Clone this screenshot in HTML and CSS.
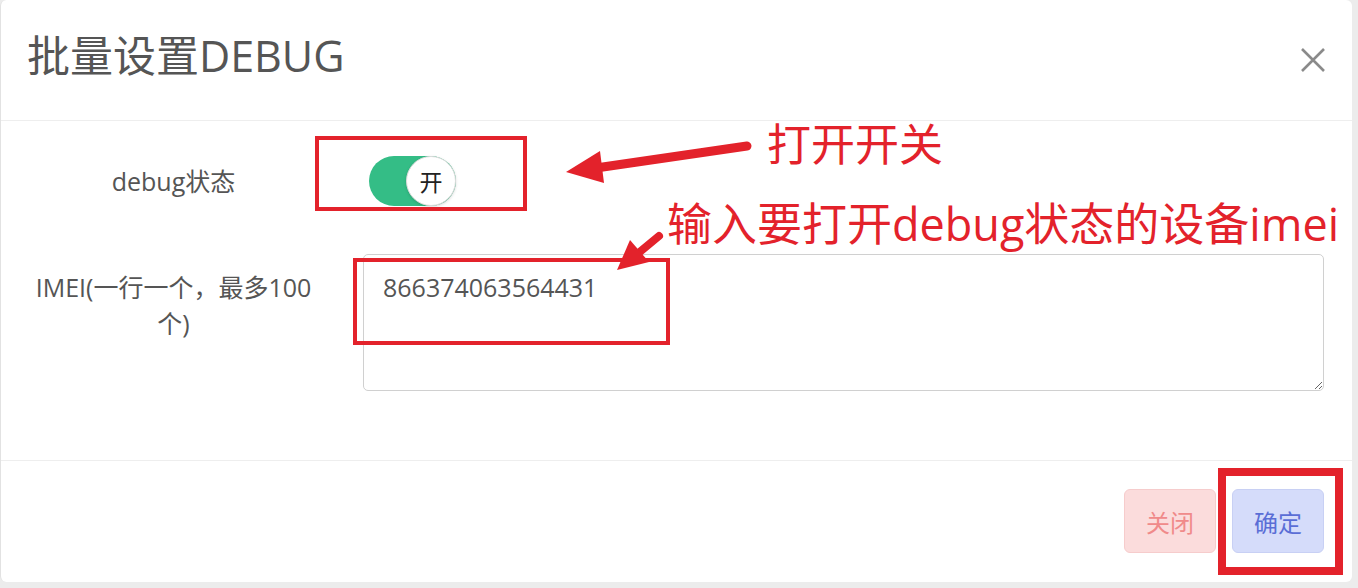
FILE: index.html
```html
<!DOCTYPE html>
<html lang="zh-CN">
<head>
<meta charset="utf-8">
<title>批量设置DEBUG</title>
<link rel="stylesheet" href="styles.css">
</head>
<body>
<div class="modal">
  <div class="modal-header">
    <h1 class="modal-title">批量设置DEBUG</h1>
    <button class="close-btn" aria-label="close">
      <svg width="26" height="26" viewBox="0 0 26 26"><path d="M2 2 L24 24 M24 2 L2 24" stroke="#8a8a8a" stroke-width="2.6" fill="none"/></svg>
    </button>
  </div>
  <div class="modal-body">
    <div class="form-row row-switch">
      <label class="form-label">debug状态</label>
      <div class="form-control">
        <div class="switch">
          <span class="switch-knob">开</span>
        </div>
      </div>
    </div>
    <div class="form-row row-imei">
      <label class="form-label label-top">IMEI(一行一个，最多100个)</label>
      <div class="form-control">
        <textarea class="imei-input">866374063564431</textarea>
      </div>
    </div>
  </div>
  <div class="modal-footer">
    <button class="btn btn-close">关闭</button>
    <button class="btn btn-ok">确定</button>
  </div>
</div>

<div class="annotations">
  <svg class="anno-svg" width="1358" height="588" viewBox="0 0 1358 588">
    <rect x="317" y="138" width="208" height="71" fill="none" stroke="#e3222b" stroke-width="4"/>
    <rect x="355" y="260" width="313" height="83" fill="none" stroke="#e3222b" stroke-width="4"/>
    <rect x="1222" y="472" width="117" height="99" fill="none" stroke="#e3222b" stroke-width="8"/>
    <line x1="747" y1="146" x2="596" y2="168" stroke="#e3222b" stroke-width="9" stroke-linecap="round"/>
    <polygon points="566,172 600,151 604,183" fill="#e3222b"/>
    <line x1="659" y1="236" x2="636" y2="255" stroke="#e3222b" stroke-width="8" stroke-linecap="round"/>
    <polygon points="617,270 630,240 649,262" fill="#e3222b"/>
  </svg>
  <span class="anno-text anno-1">打开开关</span>
  <span class="anno-text anno-2">输入要打开debug状态的设备imei</span>
</div>
</body>
</html>
```
FILE: styles.css
```css
* { box-sizing: border-box; }

html, body {
  margin: 0;
  padding: 0;
}

body {
  width: 1358px;
  height: 588px;
  background: #ececec;
  font-family: "Open Sans", "Noto Sans CJK SC", sans-serif;
  position: relative;
  overflow: hidden;
}

.modal {
  width: 1352px;
  height: 582px;
  background: #fff;
  border-radius: 6px;
  border-left: 1px solid #e2e2e2;
  display: flex;
  flex-direction: column;
}

.modal-header {
  height: 121px;
  border-bottom: 1px solid #eeeeee;
  display: flex;
  align-items: center;
  justify-content: space-between;
  padding: 0 26px 10px 26px;
}

.modal-title {
  margin: 0;
  font-size: 43px;
  font-weight: 400;
  color: #555;
  line-height: 1;
}

.close-btn {
  border: 0;
  background: none;
  padding: 0;
  margin-top: 10px;
  width: 26px;
  height: 26px;
}

.modal-body {
  flex: 1;
  padding: 35px 28px 0 0;
  display: flex;
  flex-direction: column;
  gap: 48px;
}

.form-row {
  display: grid;
  grid-template-columns: 331px 1fr;
  column-gap: 31px;
}

.row-switch { align-items: center; }

.form-label {
  font-size: 25px;
  color: #555;
  text-align: center;
  line-height: 36px;
  padding: 0 10px 0 24px;
}

.label-top { padding-top: 15px; }

.switch {
  margin-left: 6px;
  width: 87px;
  height: 50px;
  border-radius: 25px;
  background: #34bd86;
  display: flex;
  justify-content: flex-end;
}

.switch-knob {
  width: 50px;
  height: 50px;
  border-radius: 50%;
  background: #fff;
  border: 1px solid #dcdcdc;
  box-shadow: 0 1px 3px rgba(0,0,0,0.15);
  display: flex;
  align-items: center;
  justify-content: center;
  font-size: 23px;
  color: #222;
}

.imei-input {
  display: block;
  width: 100%;
  height: 137px;
  border: 1px solid #d0d0d0;
  border-radius: 5px;
  padding: 15px 19px;
  font-family: "Open Sans", "Noto Sans CJK SC", sans-serif;
  font-size: 25px;
  line-height: 34px;
  color: #555;
  resize: vertical;
  outline: none;
}

.modal-footer {
  height: 122px;
  border-top: 1px solid #eeeeee;
  display: flex;
  justify-content: flex-end;
  align-items: flex-start;
  gap: 16px;
  padding: 28px 28px 0 0;
}

.btn {
  width: 92px;
  height: 64px;
  border-radius: 6px;
  font-family: "Open Sans", "Noto Sans CJK SC", sans-serif;
  font-size: 24px;
  cursor: pointer;
}

.btn-close {
  background: #fbdcdc;
  border: 1px solid #f6cccc;
  color: #f08a8a;
}

.btn-ok {
  background: #d5dcfa;
  border: 1px solid #c8d0f4;
  color: #5a6ed6;
}

.annotations {
  position: absolute;
  left: 0;
  top: 0;
  width: 1358px;
  height: 588px;
  pointer-events: none;
}

.anno-svg {
  position: absolute;
  left: 0;
  top: 0;
}

.anno-text {
  position: absolute;
  color: #e3222b;
  font-family: "Open Sans", "Noto Sans CJK SC", sans-serif;
  font-size: 44px;
  line-height: 1;
  white-space: nowrap;
}

.anno-1 { left: 767px; top: 122px; }
.anno-2 { left: 667px; top: 201px; font-size: 45px; }
```
